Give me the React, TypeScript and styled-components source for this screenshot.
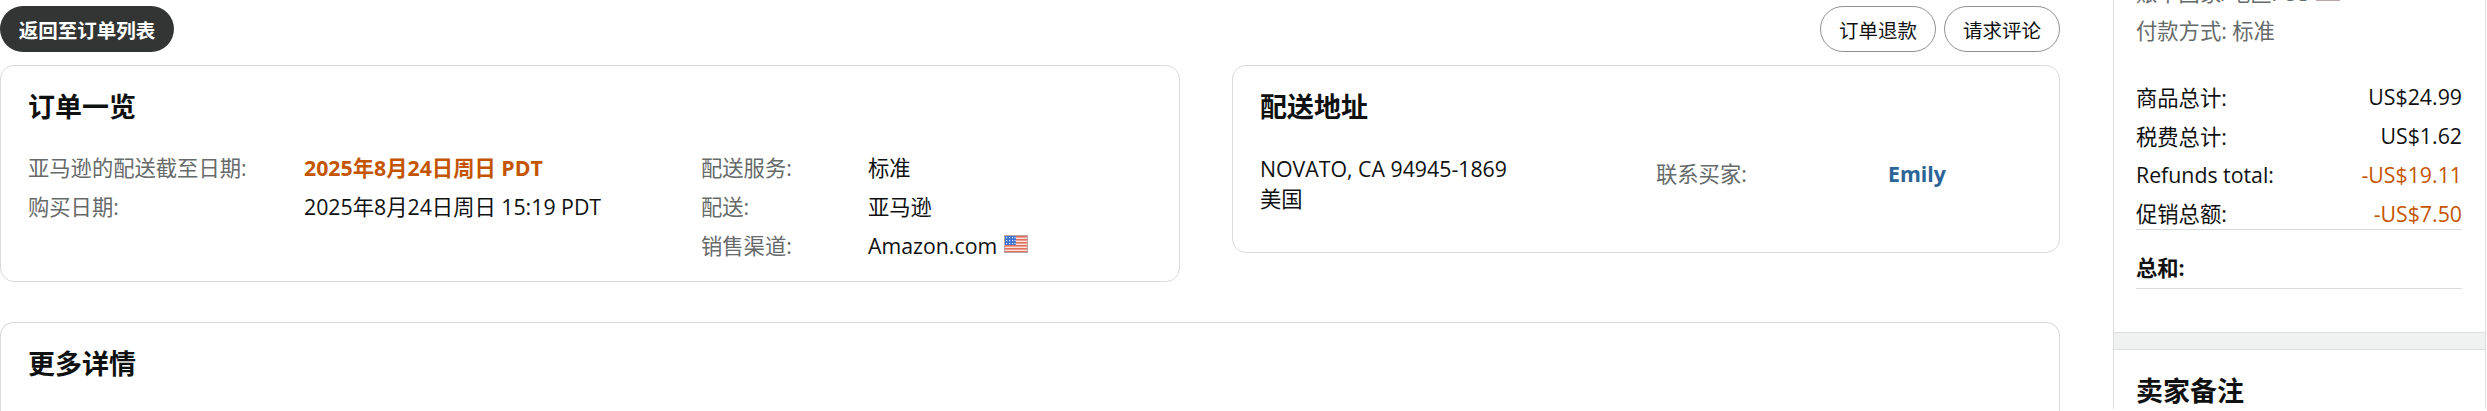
import React from "react";
import styled, { createGlobalStyle } from "styled-components";

const GlobalStyle = createGlobalStyle`
  html, body { margin: 0; padding: 0; background: #fff; }
  body {
    font-family: "Open Sans", "Noto Sans CJK SC", sans-serif;
    font-size: 21.3px;
    color: #0f1111;
  }
`;

const Page = styled.div`
  display: flex;
  align-items: flex-start;
  width: 2487px;
  height: 411px;
  overflow: hidden;
`;
const Main = styled.main`
  width: 2060px;
  flex: none;
`;
const Toolbar = styled.div`
  display: flex;
  justify-content: space-between;
  padding-top: 6px;
  margin-bottom: 13px;
`;
const Actions = styled.div`
  display: flex;
  gap: 8px;
`;
const BackButton = styled.button`
  width: 174px;
  height: 46px;
  padding: 0;
  border: 0;
  border-radius: 23px;
  background: #333535;
  color: #fff;
  font: 700 19.5px "Open Sans", "Noto Sans CJK SC", sans-serif;
`;
const PillButton = styled.button`
  width: 116px;
  height: 46px;
  padding: 0;
  border: 1px solid #8d9096;
  border-radius: 23px;
  background: #fff;
  color: #0f1111;
  font: 400 19.5px "Open Sans", "Noto Sans CJK SC", sans-serif;
`;
const CardRow = styled.div`
  display: flex;
  align-items: flex-start;
  gap: 52px;
`;
const Card = styled.section<{ $width: number; $height: number }>`
  box-sizing: border-box;
  width: ${(p) => p.$width}px;
  height: ${(p) => p.$height}px;
  padding: 22px 27px 0;
  border: 1px solid #d8dada;
  border-radius: 14px;
`;
const MoreCard = styled(Card)`
  margin-top: 40px;
  border-bottom: 0;
  border-bottom-left-radius: 0;
  border-bottom-right-radius: 0;
`;
const Title = styled.h2`
  margin: 0;
  font: 700 27px/37px "Open Sans", "Noto Sans CJK SC", sans-serif;
`;
const OverviewGrid = styled.div`
  display: grid;
  grid-template-columns: 276px 397px 167px 1fr;
  grid-auto-rows: 39px;
  align-items: center;
  margin-top: 23px;
  line-height: 39px;
`;
const Label = styled.span`
  color: #666a6a;
`;
const Value = styled.span<{ $accent?: boolean }>`
  font-weight: ${(p) => (p.$accent ? 700 : 400)};
  color: ${(p) => (p.$accent ? "#c45500" : "#0f1111")};
`;
const Spacer = styled.span``;
const Channel = styled.span`
  display: flex;
  align-items: center;
  gap: 7px;
`;
const Flag = styled.svg`
  flex: none;
  width: 24px;
  height: 18px;
  margin-top: -3px;
`;
const ShipBody = styled.div`
  display: flex;
  margin-top: 29px;
`;
const Address = styled.div`
  width: 396px;
  line-height: 30px;
  flex: none;
`;
const Contact = styled.div`
  display: grid;
  grid-template-columns: 232px auto;
  line-height: 30px;
  margin-top: 5px;
`;
const BuyerLink = styled.a`
  font-weight: 700;
  color: #2b6496;
`;
const Sidebar = styled.aside`
  box-sizing: border-box;
  flex: none;
  width: 373px;
  margin-left: 53px;
  margin-top: -26px;
  border-left: 1px solid #dcdcdc;
  border-right: 1px solid #dcdcdc;
`;
const SummaryBlock = styled.div`
  padding: 0 23px 43px 22px;
`;
const MetaLine = styled.div`
  display: flex;
  align-items: center;
  gap: 6px;
  height: 38px;
  color: #666a6a;
  line-height: 38px;
`;
const Totals = styled.div`
  margin-top: 27px;
`;
const TotalRow = styled.div`
  display: flex;
  justify-content: space-between;
  align-items: center;
  height: 39px;
`;
const DiscountRow = styled(TotalRow)`
  box-sizing: border-box;
  height: 36px;
  align-items: flex-start;
  line-height: 39px;
  border-bottom: 1px solid #d8dada;
`;
const GrandRow = styled(TotalRow)`
  box-sizing: border-box;
  height: 59px;
  padding-top: 15px;
  border-bottom: 1px solid #d8dada;
`;
const Money = styled.span<{ $negative?: boolean }>`
  color: ${(p) => (p.$negative ? "#c45500" : "#0f1111")};
`;
const Strong = styled.strong`
  font-weight: 700;
`;
const Band = styled.div`
  height: 16px;
  background: #f0f2f2;
  border-top: 1px solid #dedede;
  border-bottom: 1px solid #dedede;
`;
const NotesBlock = styled.div`
  padding: 22px 22px 0;
`;

const UsFlag = () => (
  <Flag viewBox="0 0 24 18" aria-hidden="true">
    <rect width="24" height="18" fill="#fbe3dd" />
    {[1, 4, 7, 10, 13, 16].map((y) => (
      <rect key={y} x="0" y={y} width="24" height="1.6" fill="#e2705f" />
    ))}
    <rect width="12" height="10" fill="#3d74d4" />
    {[2, 5, 8].map((y) =>
      [2, 5, 8, 10.5].map((x) => (
        <rect key={`${x}-${y}`} x={x} y={y} width="1.2" height="1.2" fill="#dbe7fb" />
      ))
    )}
    <rect x="0.5" y="0.5" width="23" height="17" fill="none" stroke="#b9a7a3" strokeWidth="1" />
  </Flag>
);

export default function App() {
  return (
    <Page>
      <GlobalStyle />
      <Main>
        <Toolbar>
          <BackButton>返回至订单列表</BackButton>
          <Actions>
            <PillButton>订单退款</PillButton>
            <PillButton>请求评论</PillButton>
          </Actions>
        </Toolbar>
        <CardRow>
          <Card $width={1180} $height={217}>
            <Title>订单一览</Title>
            <OverviewGrid>
              <Label>亚马逊的配送截至日期:</Label>
              <Value $accent>2025年8月24日周日 PDT</Value>
              <Label>配送服务:</Label>
              <Value>标准</Value>
              <Label>购买日期:</Label>
              <Value>2025年8月24日周日 15:19 PDT</Value>
              <Label>配送:</Label>
              <Value>亚马逊</Value>
              <Spacer />
              <Spacer />
              <Label>销售渠道:</Label>
              <Channel>
                <Value>Amazon.com</Value>
                <UsFlag />
              </Channel>
            </OverviewGrid>
          </Card>
          <Card $width={828} $height={188}>
            <Title>配送地址</Title>
            <ShipBody>
              <Address>
                NOVATO, CA 94945-1869
                <br />
                美国
              </Address>
              <Contact>
                <Label>联系买家:</Label>
                <BuyerLink>Emily</BuyerLink>
              </Contact>
            </ShipBody>
          </Card>
        </CardRow>
        <MoreCard $width={2060} $height={100}>
          <Title>更多详情</Title>
        </MoreCard>
      </Main>
      <Sidebar>
        <SummaryBlock>
          <MetaLine>
            账单国家/地区: US
            <UsFlag />
          </MetaLine>
          <MetaLine>付款方式: 标准</MetaLine>
          <Totals>
            <TotalRow>
              <span>商品总计:</span>
              <Money>US$24.99</Money>
            </TotalRow>
            <TotalRow>
              <span>税费总计:</span>
              <Money>US$1.62</Money>
            </TotalRow>
            <TotalRow>
              <span>Refunds total:</span>
              <Money $negative>-US$19.11</Money>
            </TotalRow>
            <DiscountRow>
              <span>促销总额:</span>
              <Money $negative>-US$7.50</Money>
            </DiscountRow>
            <GrandRow>
              <Strong>总和:</Strong>
            </GrandRow>
          </Totals>
        </SummaryBlock>
        <Band />
        <NotesBlock>
          <Title>卖家备注</Title>
        </NotesBlock>
      </Sidebar>
    </Page>
  );
}
